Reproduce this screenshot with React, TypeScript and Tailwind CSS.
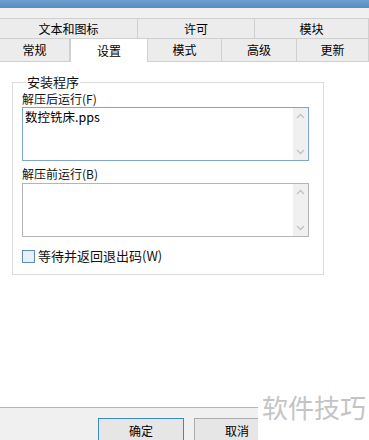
import React from 'react';

const font = { fontFamily: '"Noto Sans CJK SC", "Noto Sans", sans-serif' };

const ScrollBar: React.FC = () => (
  <div className="flex flex-col justify-between items-center w-[15px] h-full bg-[#f0f0f0] py-[5px]">
    <svg width="9" height="6" viewBox="0 0 9 6">
      <path d="M1 5 L4.5 1.5 L8 5" fill="none" stroke="#c2c2c2" strokeWidth="1.3" />
    </svg>
    <svg width="9" height="6" viewBox="0 0 9 6">
      <path d="M1 1 L4.5 4.5 L8 1" fill="none" stroke="#c2c2c2" strokeWidth="1.3" />
    </svg>
  </div>
);

const TopTab: React.FC<{ label: string; w: string }> = ({ label, w }) => (
  <div className={`${w} h-full flex items-center justify-center border-t border-r border-[#d0d0d0] bg-[#ececec] text-[12px] text-black`}>
    {label}
  </div>
);

export default function App() {
  const row2 = [
    { label: '常规', w: 'w-[70px]' },
    { label: '设置', w: 'w-[78px]', active: true },
    { label: '模式', w: 'w-[74px]' },
    { label: '高级', w: 'w-[75px]' },
    { label: '更新', w: 'w-[72px]' },
  ];

  return (
    <div className="relative w-[369px] h-[440px] overflow-hidden bg-white flex flex-col" style={font}>
      {/* title bar */}
      <div className="h-[8px] bg-gradient-to-b from-[#6d9fd2] to-[#5a8cbf]" />
      <div className="h-[10px] bg-[#f0f0f0]" />

      {/* tab row 1 */}
      <div className="flex h-[20px] bg-[#f0f0f0]">
        <TopTab label="文本和图标" w="w-[138px]" />
        <TopTab label="许可" w="w-[117px]" />
        <TopTab label="模块" w="w-[114px]" />
      </div>

      {/* tab row 2 */}
      <div className="flex h-[24px] bg-[#f0f0f0] border-t border-[#d0d0d0]">
        {row2.map(t => (
          <div
            key={t.label}
            className={
              t.active
                ? `${t.w} h-full flex items-center justify-center bg-white border-l border-r border-[#d0d0d0] text-[12px] text-black`
                : `${t.w} h-full flex items-center justify-center bg-[#ececec] border-r border-b border-[#d0d0d0] text-[12px] text-black`
            }
          >
            {t.label}
          </div>
        ))}
      </div>

      {/* content */}
      <div className="flex-1 bg-white pl-[12px] pt-[13px]">
        <fieldset className="w-[312px] h-[200px] border border-[#dcdcdc] px-[9px]">
          <legend className="ml-[4px] px-[1px] text-[13px] leading-[14px] text-[#111]">安装程序</legend>
          <div className="text-[12px] leading-[14px] text-[#111] mt-[3px]">解压后运行(F)</div>
          <div className="mt-[1px] w-[287px] h-[54px] border border-[#7fa6cc] flex">
            <div className="flex-1 px-[2px] pt-[1px] text-[12.5px] leading-[16px] text-black">数控铣床.pps</div>
            <ScrollBar />
          </div>
          <div className="text-[12px] leading-[14px] text-[#111] mt-[6px]">解压前运行(B)</div>
          <div className="mt-[2px] w-[287px] h-[54px] border border-[#b4b4b4] flex">
            <div className="flex-1" />
            <ScrollBar />
          </div>
          <div className="mt-[12px] flex items-center gap-[3px]">
            <div className="w-[13px] h-[13px] border border-[#5b8cc0] bg-[#e8f1f9]" />
            <span className="text-[13px] leading-[14px] text-[#111]">等待并返回退出码(W)</span>
          </div>
        </fieldset>
      </div>

      {/* bottom button area */}
      <div className="h-[33px] bg-[#f0f0f0] border-t border-[#b5b5b5] pl-[98px] pt-[10px] flex gap-[10px]">
        <div className="w-[86px] h-[26px] border border-[#3c88c8] bg-[#e6e6e6] flex items-center justify-center text-[12px] text-black">确定</div>
        <div className="w-[86px] h-[26px] border border-[#acacac] bg-[#e6e6e6] flex items-center justify-center text-[12px] text-black">取消</div>
      </div>

      {/* watermark */}
      <div className="absolute left-[258px] top-[390px] w-[111px] h-[50px] bg-white pl-[4px] pt-[1px] text-[26px] leading-[32px] text-[#c4c4c4] tracking-[0px]">
        软件技巧
      </div>
    </div>
  );
}
